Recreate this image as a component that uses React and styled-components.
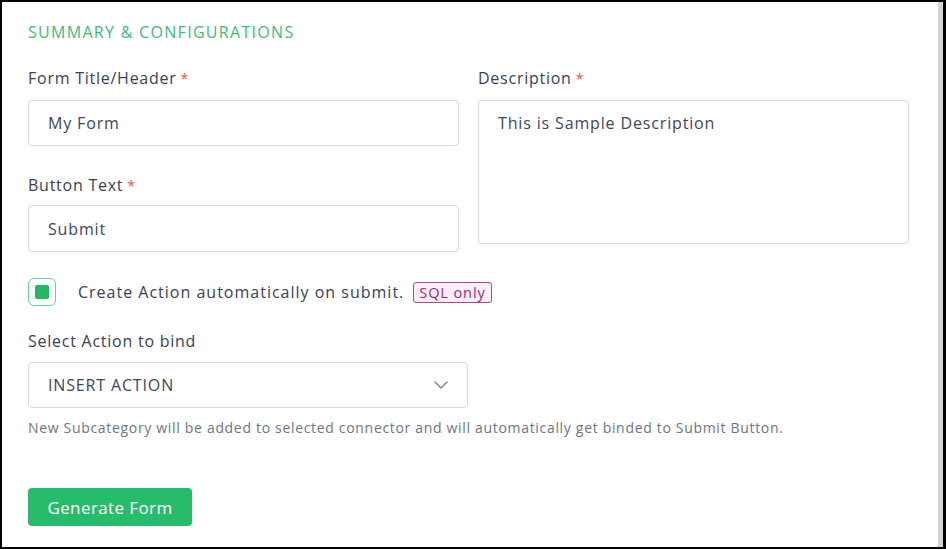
import React from "react";
import styled, { createGlobalStyle } from "styled-components";

const GlobalStyle = createGlobalStyle`
  html, body {
    margin: 0;
    padding: 0;
    background: #fff;
  }
  body {
    font-family: "Open Sans", "Liberation Sans", sans-serif;
    color: #3b4058;
  }
  * { box-sizing: border-box; }
`;

const Frame = styled.div`
  width: 946px;
  height: 549px;
  border: 2px solid #000;
  border-right-width: 3px;
  background: #fff;
  overflow: hidden;
`;

const Panel = styled.div`
  height: 100%;
  border-right: 5px solid #d3d3d3;
  padding: 21px 26px 0 26px;
  display: flex;
  flex-direction: column;
`;

const SectionTitle = styled.h2`
  margin: 0 0 27px 0;
  font-size: 16px;
  font-weight: 400;
  letter-spacing: 1.3px;
  color: #3cbc7a;
  line-height: 18px;
`;

const Grid = styled.div`
  display: grid;
  grid-template-columns: 431px 431px;
  column-gap: 19px;
`;

const Column = styled.div`
  display: flex;
  flex-direction: column;
`;

const Label = styled.label`
  display: block;
  font-size: 16px;
  line-height: 20px;
  color: #3b4058;
  margin: ${(p) => p.$top || 0}px 0 ${(p) => p.$gap || 11}px 0;
  letter-spacing: 0.75px;
`;

const Star = styled.span`
  color: #f0504a;
  margin-left: 4px;
  font-size: 14px;
`;

const Field = styled.div`
  width: ${(p) => p.$width || 431}px;
  height: ${(p) => p.$height || 46}px;
  border: 1px solid #d9d9e2;
  border-radius: 4px;
  padding: ${(p) => (p.$multi ? "11px 19px" : "0 19px")};
  display: flex;
  align-items: ${(p) => (p.$multi ? "flex-start" : "center")};
  justify-content: space-between;
  font-size: 16px;
  letter-spacing: 0.85px;
  color: #3f4560;
  background: #fff;
`;

const CheckRow = styled.div`
  display: flex;
  align-items: center;
  margin-top: 26px;
`;

const Box = styled.div`
  width: 28px;
  height: 28px;
  border: 1.5px solid #5fd49a;
  border-radius: 6px;
  display: flex;
  align-items: center;
  justify-content: center;
  margin-right: 22px;
`;

const BoxFill = styled.div`
  width: 14px;
  height: 14px;
  border-radius: 2px;
  background: #27b866;
`;

const CheckText = styled.span`
  font-size: 16px;
  color: #3b4058;
  letter-spacing: 1px;
`;

const Badge = styled.span`
  margin-left: 9px;
  padding: 0 5px;
  height: 21px;
  line-height: 19px;
  border: 1px solid #b8418a;
  border-radius: 3px;
  background: #fdeff8;
  color: #9b2c72;
  font-size: 14.5px;
  letter-spacing: 0.9px;
`;

const Help = styled.p`
  margin: 11px 0 0 0;
  font-size: 14px;
  color: #6f7585;
  letter-spacing: 0.68px;
  line-height: 18px;
`;

const PrimaryButton = styled.button`
  margin-top: 51px;
  width: 164px;
  height: 38px;
  border: none;
  border-radius: 4px;
  background: #27bc6b;
  color: #fff;
  font-family: "Open Sans", "Liberation Sans", sans-serif;
  font-size: 17px;
  letter-spacing: 0.4px;
  font-weight: 500;
  cursor: pointer;
  align-self: flex-start;
`;

function Chevron() {
  return (
    <svg width="14" height="8" viewBox="0 0 14 8" fill="none">
      <path d="M1 1l6 6 6-6" stroke="#7b8091" strokeWidth="1.4" strokeLinecap="round" strokeLinejoin="round" />
    </svg>
  );
}

export default function App() {
  return (
    <>
      <GlobalStyle />
      <Frame>
        <Panel>
          <SectionTitle>SUMMARY &amp; CONFIGURATIONS</SectionTitle>
          <Grid>
            <Column>
              <Label>
                Form Title/Header<Star>*</Star>
              </Label>
              <Field>My Form</Field>
              <Label $top={29} $gap={9}>
                Button Text<Star>*</Star>
              </Label>
              <Field $height={47}>Submit</Field>
            </Column>
            <Column>
              <Label>
                Description<Star>*</Star>
              </Label>
              <Field $height={144} $multi>
                This is Sample Description
              </Field>
            </Column>
          </Grid>
          <CheckRow>
            <Box>
              <BoxFill />
            </Box>
            <CheckText>Create Action automatically on submit.</CheckText>
            <Badge>SQL only</Badge>
          </CheckRow>
          <Label $top={25}>Select Action to bind</Label>
          <Field $width={440}>
            INSERT ACTION
            <Chevron />
          </Field>
          <Help>
            New Subcategory will be added to selected connector and will automatically get binded to Submit Button.
          </Help>
          <PrimaryButton>Generate Form</PrimaryButton>
        </Panel>
      </Frame>
    </>
  );
}
